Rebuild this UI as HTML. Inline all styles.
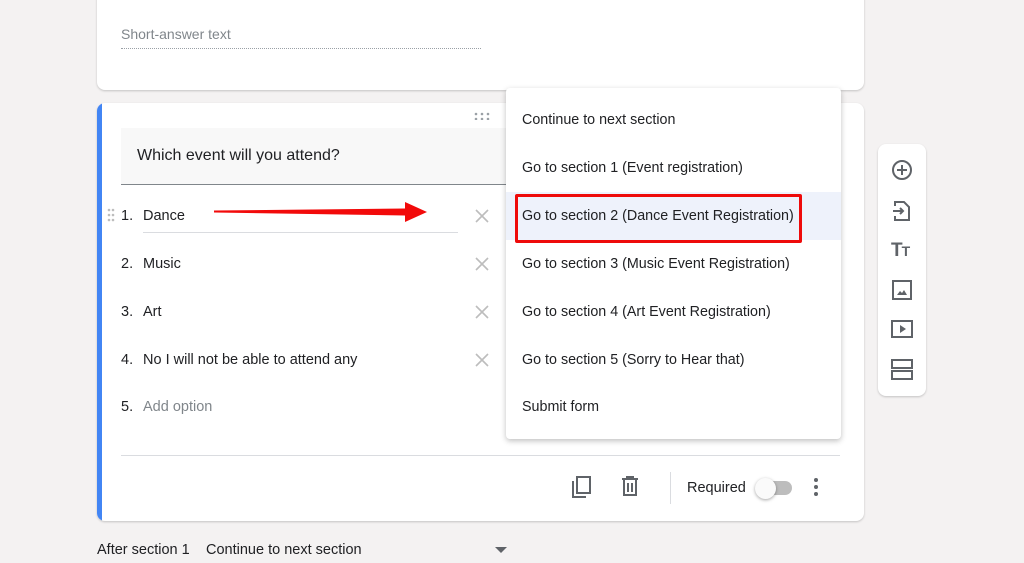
<!DOCTYPE html>
<html><head><style>
*{box-sizing:border-box;margin:0;padding:0}
body{width:1024px;height:563px;background:#f4f2f2;font-family:"Liberation Sans",Arial,sans-serif;color:#202124;position:relative;overflow:hidden}
.card{position:absolute;background:#fff;border-radius:8px;box-shadow:0 1px 2px rgba(0,0,0,.2)}
.t{position:absolute;font-size:14.5px;white-space:nowrap}
.mi{position:absolute;left:16px;font-size:14.3px;color:#202124;white-space:nowrap}
</style></head><body>
<div class="card" style="left:97px;top:-10px;width:767px;height:100px"></div>
<div class="t" style="left:121px;top:26px;color:#80868b;font-size:14px">Short-answer text</div>
<div style="position:absolute;left:121px;top:48px;width:360px;border-top:1px dotted #9aa0a6"></div>

<div class="card" style="left:97px;top:103px;width:767px;height:418px;overflow:hidden">
 <div style="position:absolute;left:0;top:0;bottom:0;width:5px;background:#4285f4"></div>
</div>
<svg style="position:absolute;left:474px;top:112px" width="16" height="8"><g fill="#9aa0a6"><circle cx="2" cy="2" r="1.3"/><circle cx="8" cy="2" r="1.3"/><circle cx="14" cy="2" r="1.3"/><circle cx="2" cy="7" r="1.3"/><circle cx="8" cy="7" r="1.3"/><circle cx="14" cy="7" r="1.3"/></g></svg>
<div style="position:absolute;left:121px;top:128px;width:400px;height:57px;background:#f8f8f8;border-bottom:1px solid #80868b"></div>
<div class="t" style="left:137px;top:147px;font-size:16px">Which event will you attend?</div>

<svg style="position:absolute;left:107px;top:208px" width="8" height="16"><g fill="#bdbdbd"><circle cx="2" cy="2" r="1.3"/><circle cx="6" cy="2" r="1.3"/><circle cx="2" cy="7" r="1.3"/><circle cx="6" cy="7" r="1.3"/><circle cx="2" cy="12" r="1.3"/><circle cx="6" cy="12" r="1.3"/></g></svg>
<div class="t" style="left:121px;top:208px">1.</div><div class="t" style="left:143px;top:208px">Dance</div>
<div style="position:absolute;left:143px;top:232px;width:315px;border-top:1px solid #dadce0"></div>
<div class="t" style="left:121px;top:256px">2.</div><div class="t" style="left:143px;top:256px">Music</div>
<div class="t" style="left:121px;top:304px">3.</div><div class="t" style="left:143px;top:304px">Art</div>
<div class="t" style="left:121px;top:352px">4.</div><div class="t" style="left:143px;top:352px">No I will not be able to attend any</div>
<div class="t" style="left:121px;top:399px">5.</div><div class="t" style="left:143px;top:399px;color:#80868b">Add option</div>
<svg style="position:absolute;left:475px;top:209px" width="14" height="14"><path d="M1 1L13 13M13 1L1 13" stroke="#bdbdbd" stroke-width="1.6"/></svg>
<svg style="position:absolute;left:475px;top:257px" width="14" height="14"><path d="M1 1L13 13M13 1L1 13" stroke="#bdbdbd" stroke-width="1.6"/></svg>
<svg style="position:absolute;left:475px;top:305px" width="14" height="14"><path d="M1 1L13 13M13 1L1 13" stroke="#bdbdbd" stroke-width="1.6"/></svg>
<svg style="position:absolute;left:475px;top:353px" width="14" height="14"><path d="M1 1L13 13M13 1L1 13" stroke="#bdbdbd" stroke-width="1.6"/></svg>
<svg style="position:absolute;left:212px;top:200px" width="220" height="26"><path d="M2 10.5L193 8.5L193 2L215 12L193 22L193 15.5L2 12.5Z" fill="#f20a0a"/></svg>

<div style="position:absolute;left:121px;top:455px;width:719px;border-top:1px solid #dadce0"></div>
<svg style="position:absolute;left:571px;top:475px" width="22" height="24"><path d="M2 6V22H15" stroke="#5f6368" stroke-width="2" fill="none"/><rect x="6" y="2" width="13" height="16" stroke="#5f6368" stroke-width="2" fill="none"/></svg>
<svg style="position:absolute;left:621px;top:476px" width="18" height="20"><path d="M1 3H17M6 3V1H12V3M3 4V19H15V4M7 7V16M11 7V16" stroke="#5f6368" stroke-width="2" fill="none"/></svg>
<div style="position:absolute;left:670px;top:472px;height:32px;border-left:1px solid #dadce0"></div>
<div class="t" style="left:687px;top:480px">Required</div>
<div style="position:absolute;left:758px;top:481px;width:34px;height:14px;border-radius:7px;background:#bdbdbd"></div>
<div style="position:absolute;left:755px;top:478px;width:21px;height:21px;border-radius:50%;background:#fafafa;box-shadow:0 1px 3px rgba(0,0,0,.35)"></div>
<svg style="position:absolute;left:813px;top:477px" width="6" height="20"><g fill="#5f6368"><circle cx="3" cy="3" r="2"/><circle cx="3" cy="10" r="2"/><circle cx="3" cy="17" r="2"/></g></svg>

<div class="card" style="left:506px;top:88px;width:335px;height:351px;border-radius:4px;box-shadow:0 2px 6px rgba(0,0,0,.25)">
 <div class="mi" style="top:24px">Continue to next section</div>
 <div class="mi" style="top:72px">Go to section 1 (Event registration)</div>
 <div style="position:absolute;left:0;top:104px;width:335px;height:48px;background:#eef2fb"></div>
 <div class="mi" style="top:120px">Go to section 2 (Dance Event Registration)</div>
 <div class="mi" style="top:168px">Go to section 3 (Music Event Registration)</div>
 <div class="mi" style="top:216px">Go to section 4 (Art Event Registration)</div>
 <div class="mi" style="top:264px">Go to section 5 (Sorry to Hear that)</div>
 <div class="mi" style="top:311px">Submit form</div>
</div>
<div style="position:absolute;left:515px;top:194px;width:287px;height:49px;border:3px solid #ee0a0a;border-radius:2px"></div>

<div class="card" style="left:878px;top:144px;width:48px;height:252px"></div>
<svg style="position:absolute;left:891px;top:159px" width="22" height="22"><circle cx="11" cy="11" r="9" stroke="#5f6368" stroke-width="2" fill="none"/><path d="M11 6V16M6 11H16" stroke="#5f6368" stroke-width="2"/></svg>
<svg style="position:absolute;left:893px;top:200px" width="18" height="22"><path d="M2 6V2H11L16 7V20H2V16" stroke="#5f6368" stroke-width="2" fill="none"/><path d="M0 11H10M7 8L10 11L7 14" stroke="#5f6368" stroke-width="2" fill="none"/></svg>
<div style="position:absolute;left:891px;top:240px;font-weight:bold;color:#5f6368;font-size:19px;letter-spacing:-1px">T<span style="font-size:14px">T</span></div>
<svg style="position:absolute;left:892px;top:280px" width="20" height="20"><rect x="1" y="1" width="18" height="18" stroke="#5f6368" stroke-width="2" fill="none"/><path d="M5 15L8 11L10 13L12 10L15 15Z" fill="#5f6368"/></svg>
<svg style="position:absolute;left:891px;top:320px" width="22" height="18"><rect x="1" y="1" width="20" height="16" stroke="#5f6368" stroke-width="2" fill="none"/><path d="M9 5V13L15 9Z" fill="#5f6368"/></svg>
<svg style="position:absolute;left:891px;top:359px" width="22" height="21"><rect x="1" y="1" width="20" height="8" stroke="#5f6368" stroke-width="2" fill="none"/><rect x="1" y="12" width="20" height="8" stroke="#5f6368" stroke-width="2" fill="none"/></svg>

<div class="t" style="left:97px;top:542px">After section 1</div>
<div class="t" style="left:206px;top:542px">Continue to next section</div>
<svg style="position:absolute;left:495px;top:547px" width="12" height="6"><path d="M0 0H12L6 6Z" fill="#5f6368"/></svg>
</body></html>
